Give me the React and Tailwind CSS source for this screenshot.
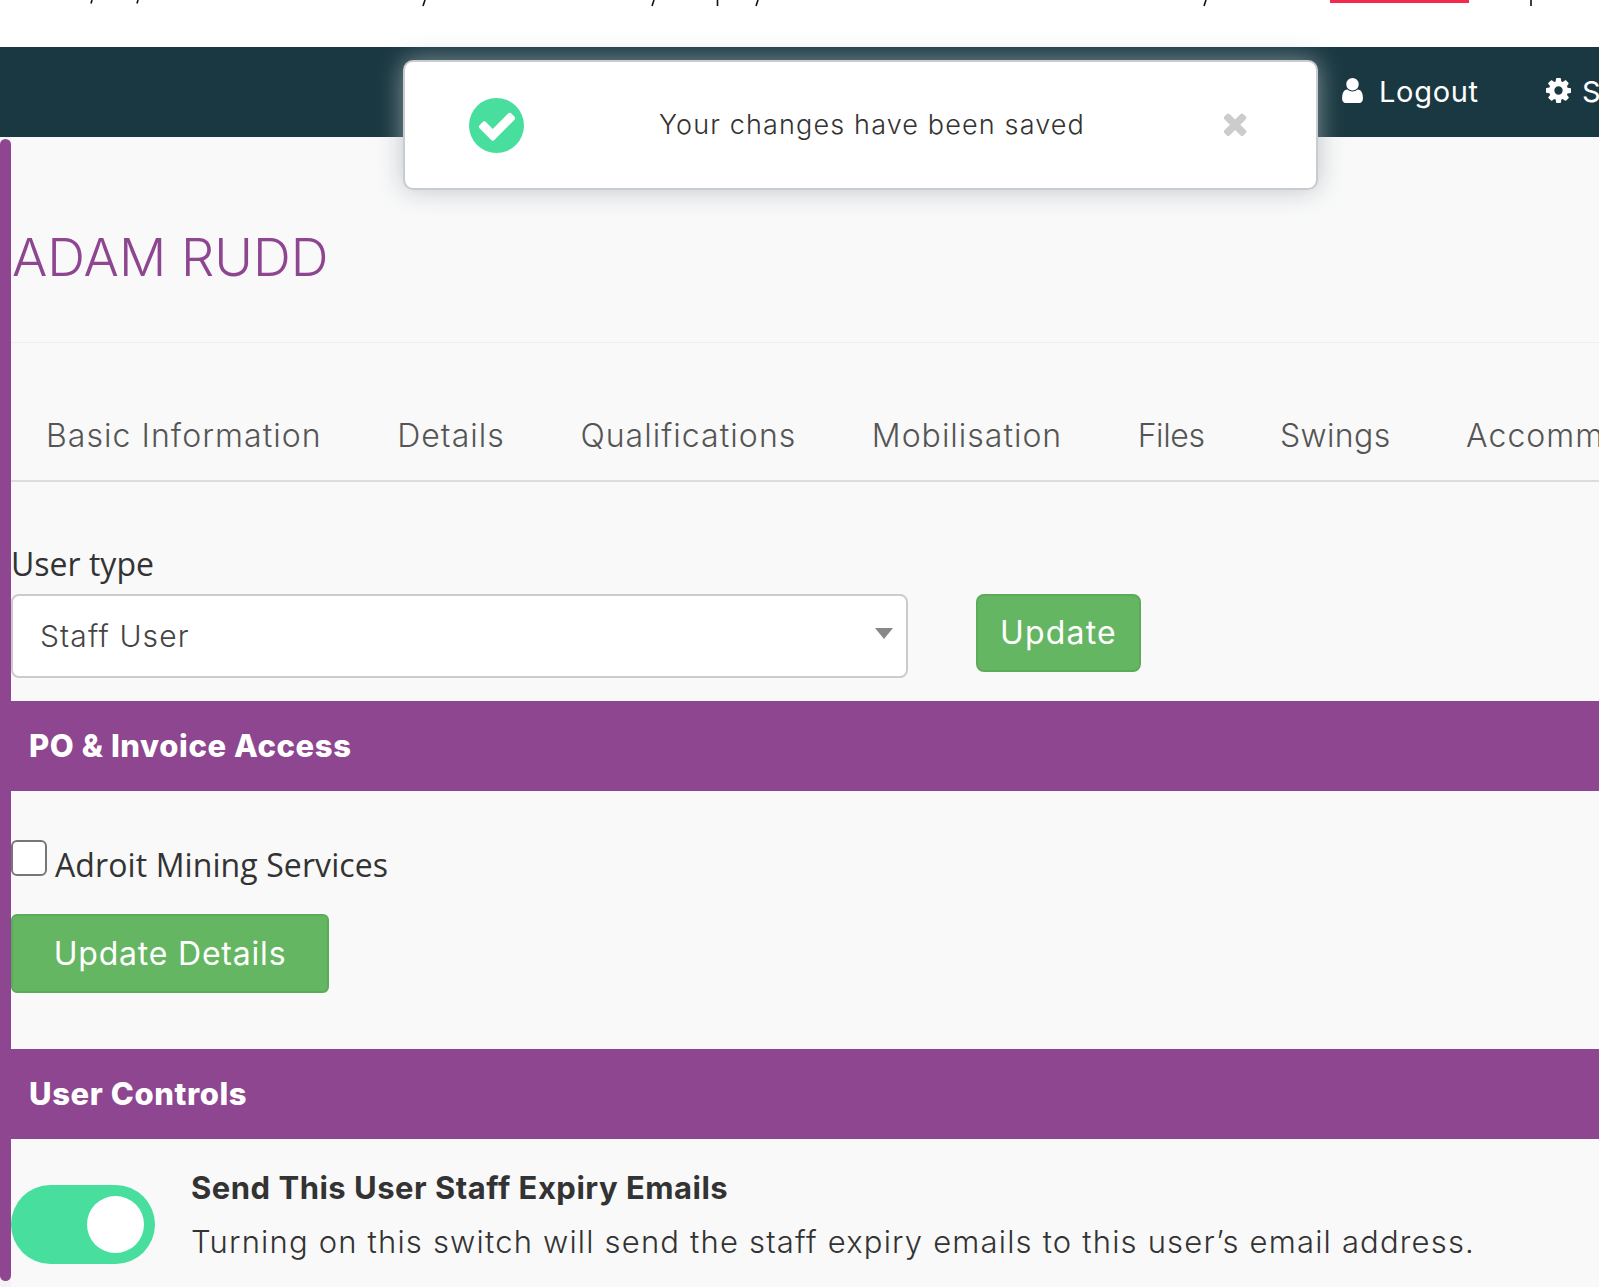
import React from "react";

const pop = "font-['Inter','Noto_Sans',sans-serif]";

const UserIcon = ({ className }) => (
  <svg viewBox="256 128 1280 1536" className={className} fill="currentColor">
    <path d="M1536 1399q0 109-62.5 187t-150.5 78h-854q-88 0-150.5-78t-62.5-187q0-85 8.5-160.5t31.5-152 58.5-131 94-89 134.5-34.5q131 128 313 128t313-128q76 0 134.5 34.5t94 89 58.5 131 31.5 152 8.5 160.5zm-256-887q0 159-112.5 271.5t-271.5 112.5-271.5-112.5-112.5-271.5 112.5-271.5 271.5-112.5 271.5 112.5 112.5 271.5z" />
  </svg>
);

const CogIcon = ({ className }) => (
  <svg viewBox="128 128 1536 1536" className={className} fill="currentColor">
    <path d="M1152 896q0-106-75-181t-181-75-181 75-75 181 75 181 181 75 181-75 75-181zm512-109v222q0 12-8 23t-20 13l-185 28q-19 54-39 91 35 50 107 138 10 12 10 25t-9 23q-27 37-99 108t-94 71q-12 0-26-9l-138-108q-44 23-91 38-16 136-29 186-7 28-36 28h-222q-14 0-24.5-8.5t-11.5-21.5l-28-184q-49-16-90-37l-141 107q-10 9-25 9-14 0-25-11-126-114-165-168-7-10-7-23 0-12 8-23 15-21 51-66.5t54-70.5q-27-50-41-99l-183-27q-13-2-21-12.5t-8-23.5v-222q0-12 8-23t19-13l186-28q14-46 39-92-40-57-107-138-10-12-10-24 0-10 9-23 26-36 98.5-107.5t94.5-71.5q13 0 26 10l138 107q44-23 91-38 16-136 29-186 7-28 36-28h222q14 0 24.5 8.5t11.5 21.5l28 184q49 16 90 37l142-107q9-9 24-9 13 0 25 10 129 119 165 170 7 8 7 22 0 12-8 23-15 21-51 66.5t-54 70.5q26 50 41 98l183 28q13 2 21 12.5t8 23.5z" />
  </svg>
);

const CheckIcon = ({ className }) => (
  <svg viewBox="0 0 1792 1792" className={className} fill="currentColor">
    <path d="M1671 566q0 40-28 68l-724 724-136 136q-28 28-68 28t-68-28l-136-136-362-362q-28-28-28-68t28-68l136-136q28-28 68-28t68 28l294 295 656-657q28-28 68-28t68 28l136 136q28 28 28 68z" />
  </svg>
);

const TimesIcon = ({ className }) => (
  <svg viewBox="238 238 1252 1316" className={className} fill="currentColor">
    <path d="M1490 1322q0 40-28 68l-136 136q-28 28-68 28t-68-28l-294-294-294 294q-28 28-68 28t-68-28l-136-136q-28-28-28-68t28-68l294-294-294-294q-28-28-28-68t28-68l136-136q28-28 68-28t68 28l294 294 294-294q28-28 68-28t68 28l136 136q28 28 28 68t-28 68l-294 294 294 294q28 28 28 68z" />
  </svg>
);

function Band({ children }) {
  return (
    <div className={`h-[90px] bg-[#8e4690] flex items-center pl-[18px] text-white text-[31px] font-extrabold tracking-[0.6px] ${pop}`}>
      {children}
    </div>
  );
}

export default function App() {
  return (
    <div className="w-[1599px] h-[1287px] overflow-hidden bg-white relative">
      <div className="h-[47px] overflow-hidden relative">
        <div className="flex h-[3px] justify-end pr-[130px]"><div className="w-[139px] bg-[#f5294d]" /></div>
        <svg className="absolute left-0 top-0 w-[1599px] h-[8px]" viewBox="0 0 1599 8" stroke="#111111" strokeWidth="1.6" fill="none">
          <path d="M92 0L91 3.5M138 0L137 3.5M425 0L423 6M654 0L652 6M717.500 0V6M758 0L756 6M1206 0L1204 6M1531 0V6" />
        </svg>
      </div>
      <div className="h-[90px] bg-[#1a3841] flex items-center justify-end">
        <div className={`flex items-center text-white text-[29px] tracking-[0.7px] ${pop}`}>
          <UserIcon className="w-[21px] h-[25px] mr-[16px] -mt-[3px]" />
          <span className="w-[100px]">Logout</span>
          <CogIcon className="w-[25px] h-[25px] ml-[67px] mr-[11px] -mt-[3px]" />
          <span className="w-[17px] overflow-hidden">S</span>
        </div>
      </div>
      <div className="flex h-[1150px] bg-[#f9f9f9]">
        <div className="w-[11px] shrink-0 bg-[#f3f3f3]">
          <div className="bg-[#8e4690] rounded-[6px] mt-[2px] h-[1142px]" />
        </div>
        <div className="flex-1 min-w-0">
          <h1 className={`h-[206px] pt-[87px] pl-[1px] text-[52.500px] leading-[66px] font-light text-[#8e4690] border-b border-[#eeeeee] ${pop}`}>ADAM RUDD</h1>
          <div className={`h-[139px] pt-[71px] border-b-2 border-[#dddddd] flex pl-[35px] gap-[75.500px] text-[#555555] text-[32px] tracking-[1.05px] font-light leading-[44px] whitespace-nowrap overflow-hidden ${pop}`}>
            <span>Basic Information</span>
            <span>Details</span>
            <span>Qualifications</span>
            <span className="tracking-[1px]">Mobilisation</span>
            <span className="tracking-[-0.4px]">Files</span>
            <span className="tracking-[0.35px]">Swings</span>
            <span>Accommodation</span>
          </div>
          <div className="h-[219px] pt-[60px]">
            <div className="text-[32px] leading-[44px] text-[#333333] font-['Open_Sans',sans-serif]">User type</div>
            <div className="flex mt-[8px] items-start">
              <div className={`w-[897px] h-[84px] border-2 border-[#cccccc] rounded-[8px] bg-white flex items-center justify-between pl-[27px] pr-[13px] text-[#444444] text-[30px] tracking-[1.1px] font-light ${pop}`}>
                <span className="mt-[1px]">Staff User</span>
                <span className="w-0 h-0 border-x-[9px] border-x-transparent border-t-[11px] border-t-[#888888] -mt-[6px]" />
              </div>
              <button className={`ml-[68px] w-[165px] h-[78px] rounded-[8px] bg-[#65b662] border-2 border-[#5cab59] text-white text-[32px] tracking-[1.2px] ${pop}`}>Update</button>
            </div>
          </div>
          <Band>PO &amp; Invoice Access</Band>
          <div className="h-[258px] pt-[49px]">
            <div className="flex items-start">
              <span className="w-[36px] h-[36px] bg-white border-2 border-[#767676] rounded-[6px]" />
              <span className="ml-[8px] mt-[3px] text-[32px] tracking-[0.1px] leading-[44px] text-[#333333] font-['Open_Sans',sans-serif]">Adroit Mining Services</span>
            </div>
            <button className={`mt-[27px] w-[318px] h-[79px] rounded-[6px] bg-[#65b662] border-2 border-[#5cab59] text-white text-[32px] tracking-[0.8px] ${pop}`}>Update Details</button>
          </div>
          <Band>User Controls</Band>
          <div className="flex pt-[46px]">
            <div className="w-[144px] h-[79px] rounded-full bg-[#48de9d] flex items-center justify-end pr-[11px] shrink-0">
              <span className="w-[57px] h-[57px] rounded-full bg-white" />
            </div>
            <div className={`ml-[36px] -mt-[24px] text-[#333333] ${pop}`}>
              <div className="text-[31px] leading-[54px] font-bold tracking-[0.5px]">Send This User Staff Expiry Emails</div>
              <div className="text-[31px] leading-[54px] font-light tracking-[1.18px] whitespace-nowrap">Turning on this switch will send the staff expiry emails to this user’s email address.</div>
            </div>
          </div>
        </div>
      </div>
      <div className={`absolute left-[403px] top-[60px] w-[915px] h-[130px] bg-white border-2 border-[#c9cbce] rounded-[10px] shadow-[0_0_26px_rgba(170,180,185,0.75)] ${pop}`}>
        <div className="absolute left-[64px] top-[36px] w-[55px] h-[55px] rounded-full bg-[#48de9d] flex items-center justify-center">
          <CheckIcon className="w-[42px] h-[42px] text-white" />
        </div>
        <div className="absolute left-[254px] top-[44px] text-[27px] tracking-[1.14px] leading-[38px] font-light text-[#333333] whitespace-nowrap">Your changes have been saved</div>
        <TimesIcon className="absolute left-[817px] top-[49px] w-[25px] h-[25px] text-[#cccccc]" />
      </div>
    </div>
  );
}
